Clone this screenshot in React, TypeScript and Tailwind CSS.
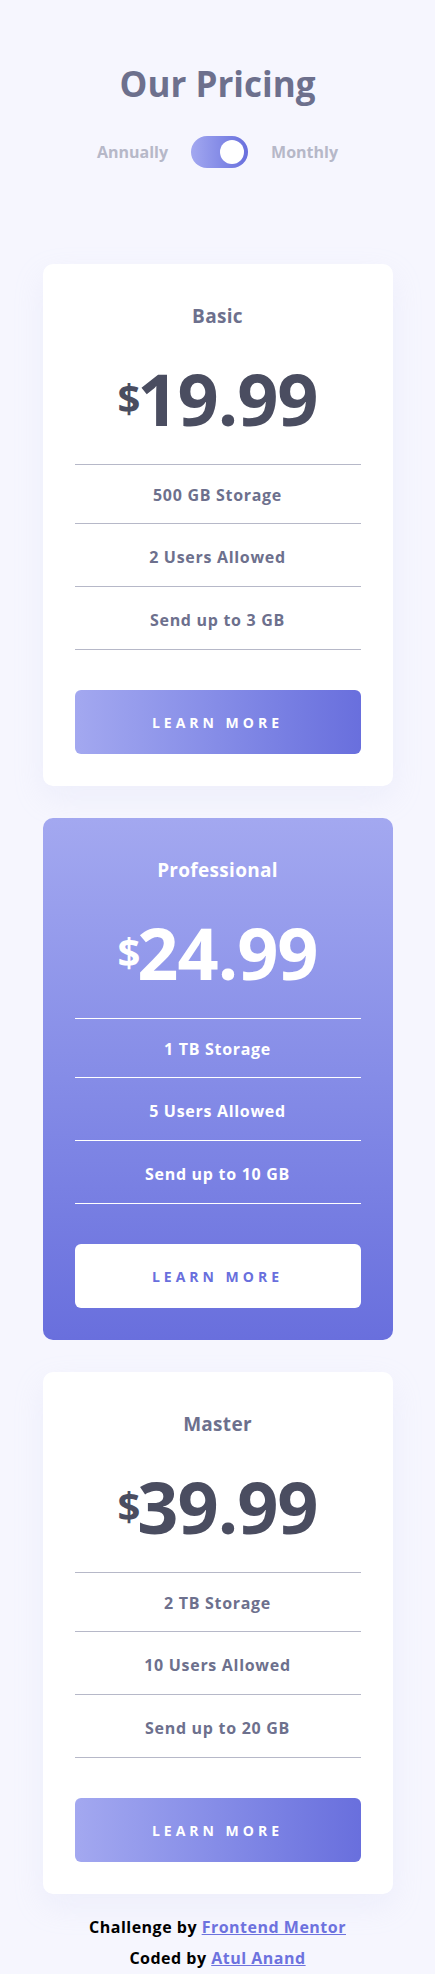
const plans = [
  {
    name: "Basic",
    price: "19.99",
    features: ["500 GB Storage", "2 Users Allowed", "Send up to 3 GB"],
    featured: false,
  },
  {
    name: "Professional",
    price: "24.99",
    features: ["1 TB Storage", "5 Users Allowed", "Send up to 10 GB"],
    featured: true,
  },
  {
    name: "Master",
    price: "39.99",
    features: ["2 TB Storage", "10 Users Allowed", "Send up to 20 GB"],
    featured: false,
  },
]

type Plan = (typeof plans)[number]

function PlanCard({ plan }: { plan: Plan }) {
  const f = plan.featured
  return (
    <div
      className={
        f
          ? "rounded-[10px] bg-gradient-to-b from-[#a3a8f0] to-[#696fdd] px-8 pt-[38px] pb-8 text-white"
          : "rounded-[10px] bg-white px-8 pt-[38px] pb-8 shadow-[0_12px_30px_rgba(200,205,240,0.18)]"
      }
    >
      <h2
        className={`text-center text-[19px] leading-[28px] font-bold tracking-[0.3px] ${
          f ? "text-white" : "text-[#6d708d]"
        }`}
      >
        {plan.name}
      </h2>

      <div className={`mt-8 flex items-center justify-center ${f ? "text-white" : "text-[#4a4d60]"}`}>
        <span className="-mr-[3px] text-[40px] leading-none font-bold">$</span>
        <span className="text-[72px] leading-none font-bold tracking-[-1px]">{plan.price}</span>
      </div>

      <ul className={`mt-[30px] border-t ${f ? "border-white" : "border-[#b6b8c8]"}`}>
        {plan.features.map((feat, i) => (
          <li
            key={feat}
            className={`border-b text-center text-[16px] leading-6 font-bold tracking-[0.7px] ${
              f ? "border-white text-white" : "border-[#b6b8c8] text-[#6d708d]"
            } ${i === 0 ? "pt-[18px] pb-4" : "pt-[21px] pb-[17px]"}`}
          >
            {feat}
          </li>
        ))}
      </ul>

      <button
        className={
          f
            ? "mt-10 h-16 w-full rounded-[6px] bg-white text-[14px] font-bold tracking-[4px] text-[#696fdd]"
            : "mt-10 h-16 w-full rounded-[6px] bg-gradient-to-r from-[#a3a8f0] to-[#696fdd] text-[14px] font-bold tracking-[4px] text-white"
        }
      >
        LEARN MORE
      </button>
    </div>
  )
}

export default function App() {
  return (
    <div className="min-h-screen bg-[#f6f6fe] pt-[62px] font-['Open_Sans',sans-serif]">
      <header className="flex flex-col items-center">
        <h1 className="text-[35px] leading-[44px] font-bold text-[#6d708d]">Our Pricing</h1>
        <div className="mt-[30px] flex items-center gap-[23px]">
          <span className="text-[16px] font-bold text-[#b6b8c8]">Annually</span>
          <div className="flex h-8 w-[57px] items-center justify-end rounded-full bg-gradient-to-r from-[#a3a8f0] to-[#696fdd] pr-1">
            <div className="h-6 w-6 rounded-full bg-white" />
          </div>
          <span className="text-[16px] font-bold text-[#b6b8c8]">Monthly</span>
        </div>
      </header>

      <main className="mx-auto mt-24 flex w-[350px] flex-col gap-8">
        {plans.map((p) => (
          <PlanCard key={p.name} plan={p} />
        ))}
      </main>

      <footer className="mt-[18px] text-center text-[16px] leading-[31px] font-bold tracking-[0.5px] text-black">
        <p>
          Challenge by{" "}
          <a href="#" className="text-[#6d72de] underline">
            Frontend Mentor
          </a>
        </p>
        <p>
          Coded by{" "}
          <a href="#" className="text-[#6d72de] underline">
            Atul Anand
          </a>
        </p>
      </footer>
    </div>
  )
}
